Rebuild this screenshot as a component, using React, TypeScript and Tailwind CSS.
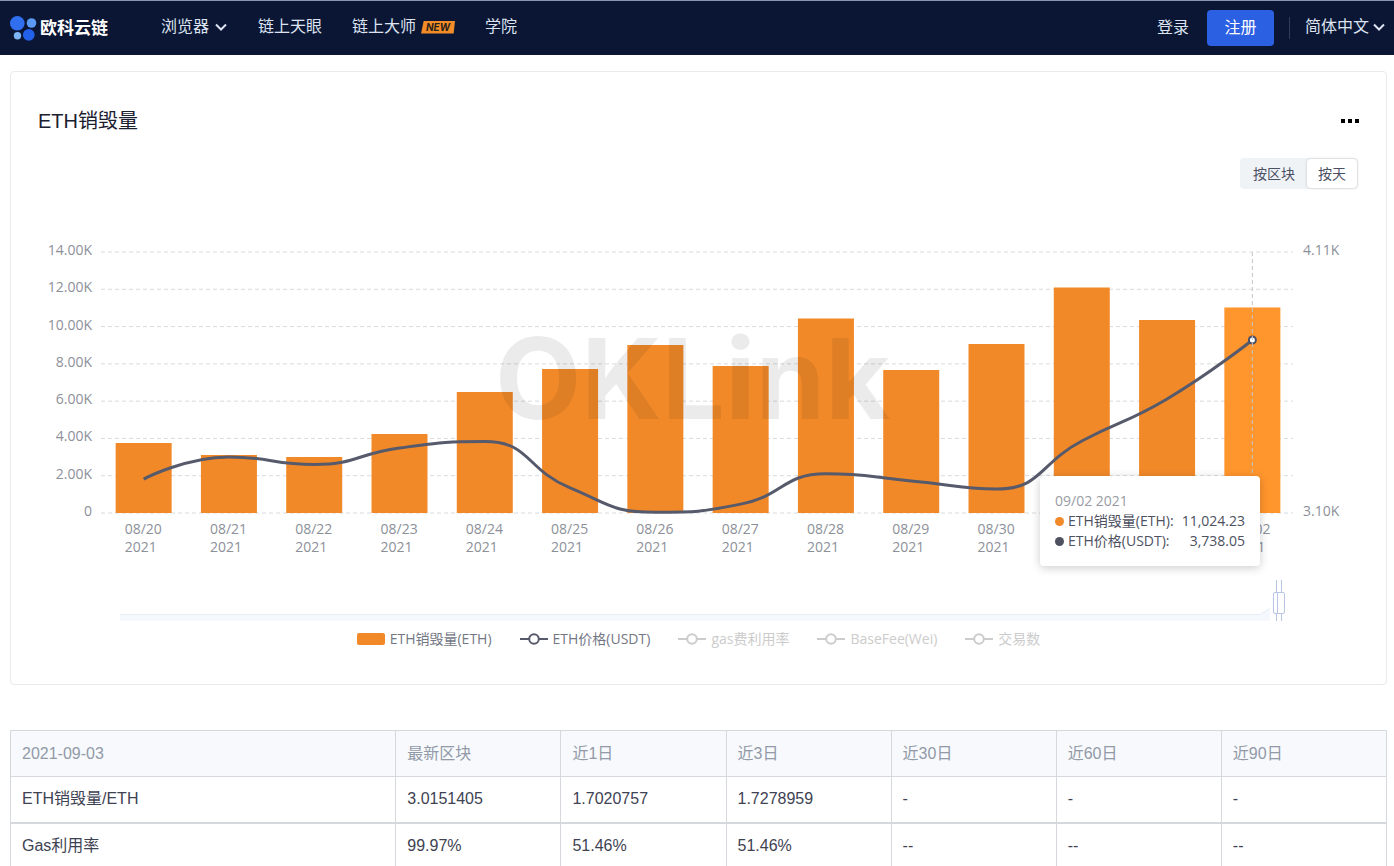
import { useState } from 'react'
import clsx from 'clsx'

const PLOT = { left: 90, right: 1284, top: 20, bottom: 281 }
const Y_MAX = 14000
const BAR_WIDTH = 56

// burned: ETH per day, level: ETH price as a share of the right axis (%)
const DAYS = [
  { day: '08/20', burned: 3755, level: 13 },
  { day: '08/21', burned: 3111, level: 21.5 },
  { day: '08/22', burned: 3004, level: 18.6 },
  { day: '08/23', burned: 4237, level: 24.9 },
  { day: '08/24', burned: 6490, level: 27.4 },
  { day: '08/25', burned: 7724, level: 9.6 },
  { day: '08/26', burned: 9011, level: 0.3 },
  { day: '08/27', burned: 7885, level: 3.4 },
  { day: '08/28', burned: 10433, level: 15 },
  { day: '08/29', burned: 7670, level: 12.3 },
  { day: '08/30', burned: 9065, level: 9.2 },
  { day: '08/31', burned: 12096, level: 27.6 },
  { day: '09/01', burned: 10352, level: 43.7 },
  { day: '09/02', burned: 11024.23, level: 66.3 },
]

const Y_TICKS = [
  '0',
  '2.00K',
  '4.00K',
  '6.00K',
  '8.00K',
  '10.00K',
  '12.00K',
  '14.00K',
]

const LEGEND = [
  { name: 'ETH销毁量(ETH)', type: 'bar', on: true },
  { name: 'ETH价格(USDT)', type: 'line', on: true },
  { name: 'gas费利用率', type: 'line', on: false },
  { name: 'BaseFee(Wei)', type: 'line', on: false },
  { name: '交易数', type: 'line', on: false },
]

const TABLE_HEAD = [
  '2021-09-03',
  '最新区块',
  '近1日',
  '近3日',
  '近30日',
  '近60日',
  '近90日',
]

const TABLE_ROWS = [
  ['ETH销毁量/ETH', '3.0151405', '1.7020757', '1.7278959', '-', '-', '-'],
  ['Gas利用率', '99.97%', '51.46%', '51.46%', '--', '--', '--'],
]

type Point = [number, number]

const step = (PLOT.right - PLOT.left) / DAYS.length
const plotHeight = PLOT.bottom - PLOT.top
const centerOf = (i: number) => PLOT.left + step * (i + 0.5)

const clamp = (v: number, a: number, b: number) =>
  Math.max(Math.min(a, b), Math.min(Math.max(a, b), v))

// smooth curve whose control points stay inside the box of each segment
function smoothPath(points: Point[], smooth = 0.5) {
  const last = points.length - 1
  let d = `M${points[0].join(' ')}`
  let out: Point = points[0]

  for (let i = 1; i <= last; i++) {
    const prev = points[i - 1]
    const p = points[i]
    let cpIn: Point = p
    let cpOut: Point = p

    if (i < last) {
      const next = points[i + 1]
      const lenPrev = Math.hypot(p[0] - prev[0], p[1] - prev[1])
      const lenNext = Math.hypot(next[0] - p[0], next[1] - p[1])
      const k = (smooth * lenNext) / (lenNext + lenPrev)

      cpOut = [
        clamp(p[0] + (next[0] - prev[0]) * k, p[0], next[0]),
        clamp(p[1] + (next[1] - prev[1]) * k, p[1], next[1]),
      ]
      const back = lenPrev / lenNext
      cpIn = [
        clamp(p[0] - (cpOut[0] - p[0]) * back, prev[0], p[0]),
        clamp(p[1] - (cpOut[1] - p[1]) * back, prev[1], p[1]),
      ]
      cpOut = [
        p[0] + (p[0] - cpIn[0]) / back,
        p[1] + (p[1] - cpIn[1]) / back,
      ]
    }

    d += `C${out.join(' ')} ${cpIn.join(' ')} ${p.join(' ')}`
    out = cpOut
  }
  return d
}

const pricePoints = DAYS.map<Point>(({ level }, i) => [
  centerOf(i),
  PLOT.bottom - (plotHeight * level) / 100,
])

function Chevron() {
  return (
    <svg
      viewBox="0 0 14 14"
      className="h-3.5 w-3.5 fill-none stroke-current stroke-2"
    >
      <path d="M2 4.5l5 5 5-5" />
    </svg>
  )
}

function Logo() {
  return (
    <a href="#" className="flex items-center gap-[3px] text-white">
      <svg viewBox="0 0 27 27" className="h-[27px] w-[27px]">
        <circle cx="7.3" cy="8.3" r="7.3" fill="#2f6ff0" />
        <circle cx="21.5" cy="8" r="4.8" fill="#5b9af2" />
        <circle cx="7.5" cy="20.8" r="3.7" fill="#7db4f5" />
        <circle cx="18.8" cy="19.8" r="5.9" fill="#2360ea" />
      </svg>
      <span className="pt-0.5 text-[17px] font-bold">欧科云链</span>
    </a>
  )
}

function Header() {
  return (
    <header className="flex h-[55px] items-center justify-between border-t border-[#8795b5] bg-[#0b1635] pr-2 pl-[10px] text-base text-[#dde3f0]">
      <div className="flex items-center gap-[53px]">
        <Logo />
        <nav className="flex items-center gap-[30px] pb-0.5">
          <button className="flex items-center gap-[5px]">
            浏览器
            <Chevron />
          </button>
          <a href="#">链上天眼</a>
          <a href="#" className="flex items-center gap-[5px]">
            链上大师
            <span className="flex h-[13px] w-[34px] items-center justify-center bg-[#f28c28] font-[Inter,sans-serif] text-[10px] font-bold text-[#2a2118] italic [clip-path:polygon(8%_0,100%_0,96%_100%,0_100%)]">
              NEW
            </span>
          </a>
          <a href="#">学院</a>
        </nav>
      </div>
      <div className="flex items-center">
        <a href="#">登录</a>
        <button className="ml-[18px] h-9 w-[67px] rounded-sm bg-[#2c60e3] text-white">
          注册
        </button>
        <span className="mx-[15px] h-[22px] w-px bg-[#333d5a]" />
        <button className="flex items-center gap-[3px] pb-0.5">
          简体中文
          <Chevron />
        </button>
      </div>
    </header>
  )
}

function Chart() {
  const active = DAYS.length - 1
  const [activeX, activeY] = pricePoints[active]
  // the tooltip covers the two days before the active one
  const hasLabel = (i: number) => i === active || i < active - 2

  return (
    <svg
      viewBox="0 0 1375 392"
      className="block h-auto w-full fill-[#8c9099] text-sm"
    >
      {Y_TICKS.map((label, i) => {
        const y = PLOT.bottom - (plotHeight * i) / 7
        return (
          <g key={label}>
            <line
              x1={PLOT.left}
              x2={1282}
              y1={y}
              y2={y}
              stroke="#d8dadd"
              strokeDasharray="4 3"
            />
            <text x={81} y={y + 3} textAnchor="end">
              {label}
            </text>
          </g>
        )
      })}
      <text x={1292} y={23}>
        4.11K
      </text>
      <text x={1292} y={284}>
        3.10K
      </text>

      {DAYS.map(({ day, burned }, i) => {
        const height = (burned / Y_MAX) * plotHeight
        return (
          <g key={day}>
            <rect
              x={centerOf(i) - BAR_WIDTH / 2}
              y={PLOT.bottom - height}
              width={BAR_WIDTH}
              height={height}
              fill={i === active ? '#ff952d' : '#f18929'}
            />
            {hasLabel(i) && (
              <>
                <text x={centerOf(i) - 19} y={302}>
                  {day}
                </text>
                <text x={centerOf(i) - 19} y={320}>
                  2021
                </text>
              </>
            )}
          </g>
        )
      })}

      <text
        x={484}
        y={187}
        className="fill-black/8 font-[Inter,sans-serif] text-[112px] font-bold"
      >
        OKLink
      </text>

      <path
        d={smoothPath(pricePoints)}
        fill="none"
        stroke="#565a6b"
        strokeWidth={3}
      />
      <circle
        cx={activeX}
        cy={activeY}
        r={3.5}
        fill="#fff"
        stroke="#4a4e63"
        strokeWidth={2}
      />
      <line
        x1={activeX}
        x2={activeX}
        y1={PLOT.top}
        y2={PLOT.bottom}
        stroke="#c4c4c8"
        strokeDasharray="4 3"
      />

      {/* range slider */}
      <path d="M109 382h1140l10-6v13H109z" fill="#f5f9fd" />
      <path d="M109 382.5h1140l10-6" fill="none" stroke="#e6edf4" />
      <g fill="#fff" stroke="#b9c5e4">
        <path d="M1265.5 348v41M1270.5 348v41" />
        <rect x={1262.5} y={360.5} width={11} height={21} rx={1.5} />
        <path d="M1266.5 361v20" />
      </g>
    </svg>
  )
}

function Tooltip() {
  return (
    <div className="absolute top-[244px] right-[126px] w-[220px] rounded bg-white p-[15px] text-sm leading-5 text-[#4d5160] shadow-[0_2px_10px_rgba(0,0,0,0.2)]">
      <p className="text-[#989ba3]">09/02 2021</p>
      <p className="flex items-center">
        <i className="mr-1 size-[9px] rounded-full bg-[#f18929]" />
        ETH销毁量(ETH):
        <span className="ml-auto">11,024.23</span>
      </p>
      <p className="flex items-center">
        <i className="mr-1 size-[9px] rounded-full bg-[#4d5160]" />
        ETH价格(USDT):
        <span className="ml-auto">3,738.05</span>
      </p>
    </div>
  )
}

function Legend() {
  return (
    <div className="mt-[5px] flex justify-center gap-7 text-sm leading-5">
      {LEGEND.map(({ name, type, on }) => (
        <button
          key={name}
          className={clsx(
            'flex items-center gap-[5px]',
            on ? 'text-[#737784]' : 'text-[#cccccc]'
          )}
        >
          {type === 'bar' ? (
            <span className="h-3 w-7 rounded-xs bg-[#f18929]" />
          ) : (
            <svg
              viewBox="0 0 28 12"
              className={clsx(
                'h-3 w-7 fill-white stroke-2',
                on ? 'stroke-[#565a6b]' : 'stroke-[#cccccc]'
              )}
            >
              <path d="M0 6h28" />
              <circle cx="14" cy="6" r="4.8" />
            </svg>
          )}
          {name}
        </button>
      ))}
    </div>
  )
}

function BurnCard() {
  const [mode, setMode] = useState('按天')

  return (
    <section className="rounded border border-[#e8eaed] pt-[35px] pb-[35px]">
      <div className="flex items-center justify-between pr-[27px] pl-[27px]">
        <h1 className="text-xl leading-7 text-[#1b2030]">ETH销毁量</h1>
        <button aria-label="更多" className="flex gap-[3px]">
          <i className="size-1 bg-black" />
          <i className="size-1 bg-black" />
          <i className="size-1 bg-black" />
        </button>
      </div>

      <div className="mt-[23px] mr-7 flex justify-end">
        <div className="flex rounded bg-[#f0f3f6] p-px text-sm text-[#4b5065]">
          {['按区块', '按天'].map((name) => (
            <button
              key={name}
              onClick={() => setMode(name)}
              className={clsx(
                'h-[29px] rounded-sm px-[11px]',
                mode === name
                  ? 'bg-white shadow-[0_0_3px_rgba(0,0,0,0.2)]'
                  : 'mx-px'
              )}
            >
              {name}
            </button>
          ))}
        </div>
      </div>

      <div className="font-['Open_Sans','Noto_Sans_CJK_SC',sans-serif]">
        <div className="relative mt-[43px]">
          <Chart />
          <Tooltip />
        </div>
        <Legend />
      </div>
    </section>
  )
}

function StatsTable() {
  return (
    <table className="mt-[45px] w-full table-fixed border-collapse text-left text-base text-[#3e4252]">
      <thead>
        <tr className="h-[46px] bg-[#f7f9fc] text-[#929aa8]">
          {TABLE_HEAD.map((name, i) => (
            <th
              key={name}
              className={clsx(
                'border border-[#d5d8dd] px-[11px] font-normal',
                i === 0 ? 'w-[28%]' : 'w-[12%]'
              )}
            >
              {name}
            </th>
          ))}
        </tr>
      </thead>
      <tbody>
        {TABLE_ROWS.map((row) => (
          <tr key={row[0]} className="h-[46px] border-b-2 border-[#d5d8dd]">
            {row.map((cell, i) => (
              <td key={i} className="border-x border-[#d5d8dd] px-[11px]">
                {cell}
              </td>
            ))}
          </tr>
        ))}
      </tbody>
    </table>
  )
}

export default function App() {
  return (
    <div className="bg-white font-['Liberation_Sans','Noto_Sans_CJK_SC',sans-serif]">
      <Header />
      <main className="mt-4 mr-[7px] ml-[10px]">
        <BurnCard />
        <StatsTable />
      </main>
    </div>
  )
}
